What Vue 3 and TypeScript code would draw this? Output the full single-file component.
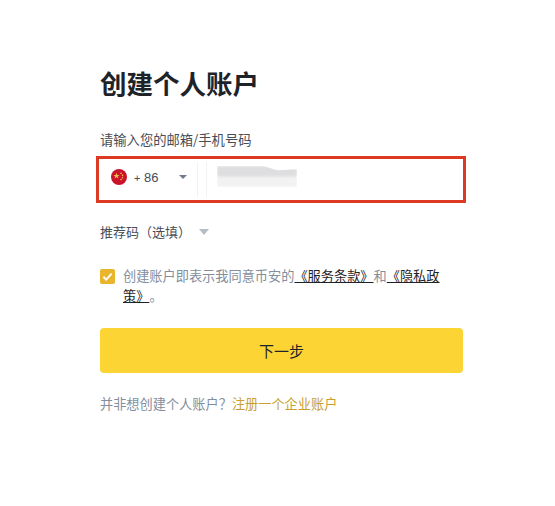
<script setup lang="ts">
const title = '创建个人账户'
</script>

<template>
  <main class="page">
    <h1 class="title">{{ title }}</h1>
    <label class="label">请输入您的邮箱/手机号码</label>
    <div class="highlight">
      <button class="country" type="button">
        <svg class="flag" viewBox="0 0 16 16" aria-hidden="true">
          <circle cx="8" cy="8" r="8" fill="#c9122b" />
          <polygon points="5.5,3.8 6.3,6 8.6,6 6.8,7.4 7.4,9.6 5.5,8.3 3.6,9.6 4.2,7.4 2.4,6 4.7,6" fill="#f2b84a" />
          <circle cx="10" cy="4.4" r=".8" fill="#f2b84a" />
          <circle cx="11.6" cy="6.4" r=".8" fill="#f2b84a" />
          <circle cx="11.6" cy="8.8" r=".8" fill="#f2b84a" />
          <circle cx="10" cy="10.6" r=".8" fill="#f2b84a" />
        </svg>
        <span class="code"><span class="plus">+</span> 86</span>
        <span class="caret small"></span>
      </button>
      <div class="phone">
        <div class="blurred"></div>
      </div>
    </div>
    <div class="referral">
      <span>推荐码（选填）</span>
      <span class="caret"></span>
    </div>
    <div class="agree">
      <span class="check">
        <svg viewBox="0 0 16 16" aria-hidden="true"><path d="M3.6 8.3l3 3 5.8-6.4" fill="none" stroke="#fff" stroke-width="2" /></svg>
      </span>
      <p class="terms">创建账户即表示我同意币安的<a>《服务条款》</a>和<a>《隐私政策》</a>。</p>
    </div>
    <button class="next" type="button">下一步</button>
    <p class="foot">并非想创建个人账户？<a>注册一个企业账户</a></p>
  </main>
</template>

<style>
html, body { margin: 0; background: #fff; }
</style>

<style scoped>
.page {
  box-sizing: border-box;
  width: 555px;
  height: 506px;
  padding: 65px 92px 0 100px;
  font-family: "Noto Sans CJK SC", "Liberation Sans", sans-serif;
  color: #1e2329;
  background: #fff;
  overflow: hidden;
  text-spacing-trim: space-all;
}
.title {
  margin: 0;
  font-size: 26.5px;
  line-height: 36px;
  font-weight: 700;
}
.label {
  display: block;
  margin-top: 29px;
  font-size: 13.3px;
  line-height: 20px;
  color: #474d57;
}
.highlight {
  box-sizing: border-box;
  display: flex;
  gap: 8px;
  width: 370px;
  height: 47px;
  margin: 6px 0 0 -4px;
  padding: 3px;
  border: 3px solid #dd3a24;
}
.country {
  display: flex;
  align-items: center;
  box-sizing: border-box;
  width: 96px;
  height: 100%;
  margin: 0;
  padding: 0 0 5px 9px;
  border: 0;
  border-right: 1px solid #f2f2f2;
  background: #fff;
  font: inherit;
}
.flag { width: 16px; height: 16px; flex: none; }
.code {
  margin-left: 7px;
  font-family: "Liberation Sans", sans-serif;
  font-size: 13px;
  color: #474d57;
}
.plus { font-size: 11px; }
.phone {
  flex: 1;
  border-left: 1px solid #f2f2f2;
  padding: 4px 0 0 10px;
}
.blurred {
  width: 80px;
  height: 21px;
  background: linear-gradient(180deg, #dedee0 0 45%, #f2f2f3 55% 100%);
  clip-path: polygon(0 0, 58% 0, 75% 20%, 100% 15%, 100% 100%, 0 100%);
  filter: blur(1px);
}
.caret {
  display: inline-block;
  width: 0;
  height: 0;
  border-left: 5.5px solid transparent;
  border-right: 5.5px solid transparent;
  border-top: 6px solid #b7bdc6;
}
.caret.small {
  margin-left: 20px;
  border-left-width: 4px;
  border-right-width: 4px;
  border-top: 4px solid #707a8a;
}
.referral {
  display: flex;
  align-items: center;
  gap: 8px;
  margin-top: 19px;
  font-size: 13px;
  line-height: 20px;
  color: #474d57;
}
.agree {
  display: flex;
  gap: 8px;
  margin-top: 24px;
}
.check {
  flex: none;
  width: 15px;
  height: 15px;
  margin-top: 3px;
  border-radius: 2px;
  background: #e9b52c;
}
.check svg { display: block; width: 15px; height: 15px; }
.terms {
  margin: 0;
  font-size: 13.2px;
  line-height: 20px;
  color: #848e9c;
}
.terms a {
  color: #1e2329;
  text-decoration: underline;
}
.next {
  display: block;
  width: 363px;
  height: 45px;
  margin: 22px 0 0;
  padding: 0 0 1px;
  border: 0;
  border-radius: 4px;
  background: #fcd535;
  color: #1e2329;
  font: inherit;
  font-size: 15px;
}
.foot {
  margin: 21px 0 0;
  font-size: 13.2px;
  line-height: 20px;
  color: #848e9c;
}
.foot a { color: #c99f2e; }
</style>
